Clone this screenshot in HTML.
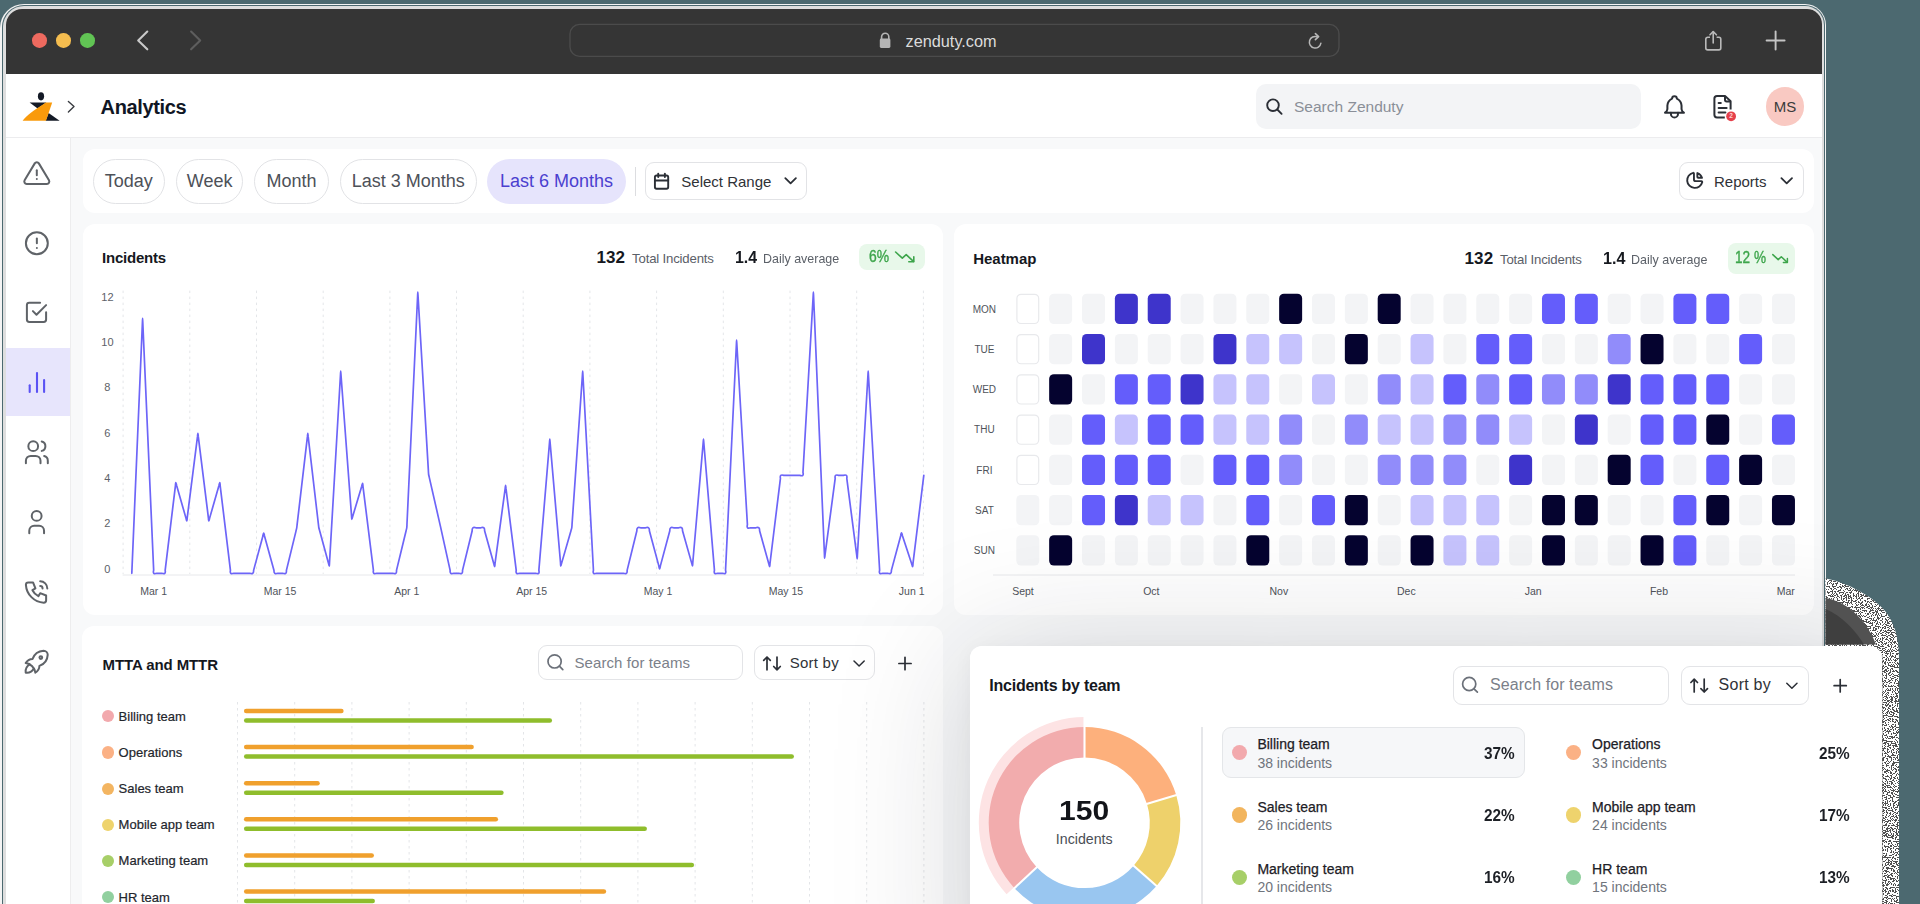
<!DOCTYPE html>
<html><head><meta charset="utf-8"><style>
html,body{margin:0;padding:0;}
body{width:1920px;height:904px;overflow:hidden;position:relative;background:#4c6970;font-family:"Liberation Sans", sans-serif;}
.a{position:absolute;box-sizing:border-box;}
.t{position:absolute;line-height:1;white-space:nowrap;-webkit-font-smoothing:antialiased;}
svg{position:absolute;overflow:visible;}
</style></head><body>
<div class="a" style="left:0.0px;top:4.0px;width:1826.0px;height:1096.0px;background:#f4f4f4;border-radius:24px 21px 0 0"></div><div class="a" style="left:2.0px;top:5.0px;width:1823.0px;height:1095.0px;background:#4c6970;border-radius:22px 20px 0 0"></div><div class="a" style="left:3.3px;top:6.0px;width:1820.9px;height:1094.0px;background:#dedede;border-radius:21px 19px 0 0"></div><div class="a" style="left:5.5px;top:9.0px;width:1816.5px;height:1091.0px;background:#fff;border-radius:16px 15px 0 0"></div><div class="a" style="left:5.5px;top:9.0px;width:1816.5px;height:65.0px;background:#353535;border-radius:16px 15px 0 0"></div><div class="a" style="left:32.2px;top:33.1px;width:14.6px;height:14.6px;background:#ee6a5f;border-radius:50%"></div><div class="a" style="left:56.0px;top:33.1px;width:14.6px;height:14.6px;background:#f5bd4f;border-radius:50%"></div><div class="a" style="left:80.0px;top:33.1px;width:14.6px;height:14.6px;background:#61c454;border-radius:50%"></div><svg style="left:0;top:0" width="1920" height="80"><polyline points="147.3,31.5 138.2,40.4 147.3,49.3" fill="none" stroke="#c9c9c9" stroke-width="2.1" stroke-linecap="round" stroke-linejoin="round"/><polyline points="191.1,31.5 200.2,40.4 191.1,49.3" fill="none" stroke="#5e5e5e" stroke-width="2.1" stroke-linecap="round" stroke-linejoin="round"/><rect x="570" y="24.4" width="769" height="32" rx="9.5" fill="none" stroke="#4b4b4b" stroke-width="1.4" transform="translate(0,0)"/></svg><svg style="left:0;top:0" width="1920" height="80"><path d="M881.6,39 v-2.2 a3.6,3.6 0 0 1 7.2,0 v2.2" fill="none" stroke="#b5b5b5" stroke-width="1.6"/><rect x="879.8" y="38.6" width="10.6" height="9.4" rx="1.4" fill="#b5b5b5"/><path d="M1320.9,43.2 A5.8,5.8 0 1 1 1317.2,36.8" fill="none" stroke="#b8b8b8" stroke-width="1.5" stroke-linecap="round"/><polyline points="1315.4,33.6 1318.6,36.6 1315.4,39.6" fill="none" stroke="#b8b8b8" stroke-width="1.6" stroke-linecap="round" stroke-linejoin="round"/><path d="M1710,37.3 h-2.3 a1.9,1.9 0 0 0 -1.9,1.9 v8.8 a1.9,1.9 0 0 0 1.9,1.9 h11.2 a1.9,1.9 0 0 0 1.9,-1.9 v-8.8 a1.9,1.9 0 0 0 -1.9,-1.9 h-2.3" fill="none" stroke="#b9b9b9" stroke-width="1.6"/><line x1="1713.2" y1="31.8" x2="1713.2" y2="43" stroke="#b9b9b9" stroke-width="1.6" stroke-linecap="round"/><polyline points="1710,34.8 1713.2,31.6 1716.4,34.8" fill="none" stroke="#b9b9b9" stroke-width="1.6" stroke-linecap="round" stroke-linejoin="round"/><line x1="1775.6" y1="31.5" x2="1775.6" y2="49.5" stroke="#c4c4c4" stroke-width="1.9" stroke-linecap="round"/><line x1="1766.6" y1="40.5" x2="1784.6" y2="40.5" stroke="#c4c4c4" stroke-width="1.9" stroke-linecap="round"/></svg><div class="t" style="left:905.5px;top:33.0px;font-size:16.3px;font-weight:400;color:#dcdcdc;">zenduty.com</div><div class="a" style="left:5.5px;top:136.5px;width:1816.5px;height:1.1px;background:#ececee"></div><svg style="left:0;top:0" width="200" height="140"><ellipse cx="41" cy="96.3" rx="3.1" ry="4.1" fill="#141a26"/><polygon points="29.6,102.6 46.4,102.6 37.6,108.6" fill="#141a26"/><polygon points="48.6,112.9 59.6,120.7 45.6,120.7" fill="#141a26"/><path d="M45.8,102.6 L52.2,102.6 L46,120.7 L22.6,120.7 C27,115 36,109 45.8,102.6 Z" fill="#f99a0b"/><polyline points="68.4,101.4 74,106.6 68.4,111.9" fill="none" stroke="#3a3d42" stroke-width="1.4" stroke-linecap="round" stroke-linejoin="round"/></svg><div class="t" style="left:100.6px;top:97.2px;font-size:20px;font-weight:700;color:#101624;letter-spacing:-0.35px;">Analytics</div><div class="a" style="left:1255.5px;top:83.8px;width:385.0px;height:45.5px;background:#f3f4f6;border-radius:10px"></div><svg style="left:0;top:0" width="1920" height="140"><circle cx="1273" cy="105.2" r="5.8" fill="none" stroke="#2a2e35" stroke-width="1.9"/><line x1="1277.3" y1="109.5" x2="1281.6" y2="113.8" stroke="#2a2e35" stroke-width="1.9" stroke-linecap="round"/><g transform="translate(1660.3,92.66) scale(1.18)" fill="none" stroke="#2b2f36" stroke-width="1.7" stroke-linecap="round" stroke-linejoin="round"><path d="M10 5a2 2 0 1 1 4 0a7 7 0 0 1 4 6v3a4 4 0 0 0 2 3h-16a4 4 0 0 0 2 -3v-3a7 7 0 0 1 4 -6"/><path d="M9 17v1a3 3 0 0 0 6 0v-1"/></g><path d="M1730.6,109.4 V101.3 L1725,95.9 H1717 a2.6,2.6 0 0 0 -2.6,2.6 V114.8 a2.6,2.6 0 0 0 2.6,2.6 H1724.8" fill="none" stroke="#2b2f36" stroke-width="2" stroke-linejoin="round"/><path d="M1725,96.2 V99.8 a1.6,1.6 0 0 0 1.6,1.6 H1730.4" fill="none" stroke="#2b2f36" stroke-width="2" stroke-linejoin="round"/><line x1="1718.6" y1="103.1" x2="1720.8" y2="103.1" stroke="#2b2f36" stroke-width="2" stroke-linecap="round"/><line x1="1718.6" y1="107.9" x2="1726.6" y2="107.9" stroke="#2b2f36" stroke-width="2" stroke-linecap="round"/><line x1="1718.6" y1="112.6" x2="1725.4" y2="112.6" stroke="#2b2f36" stroke-width="2" stroke-linecap="round"/><circle cx="1731.1" cy="116.3" r="4.9" fill="#e5404b"/></svg><div class="t" style="left:1729.2px;top:113.1px;font-size:6.5px;font-weight:700;color:#fbd0d0;">2</div><div class="t" style="left:1294.0px;top:99.0px;font-size:15.5px;font-weight:400;color:#8a8f98;">Search Zenduty</div><div class="a" style="left:1765.9px;top:87.2px;width:38.4px;height:38.4px;background:#f9c9c2;border-radius:50%"></div><div class="t" style="left:1485.1px;width:600px;text-align:center;top:98.8px;font-size:15px;font-weight:400;color:#3b3b3b;">MS</div><div class="a" style="left:71.0px;top:137.6px;width:1751.0px;height:962.4px;background:#f8f9fa"></div><div class="a" style="left:70.0px;top:137.6px;width:1.3px;height:962.4px;background:#ededee"></div><div class="a" style="left:5.5px;top:348.4px;width:64.5px;height:67.6px;background:#e7e5fc"></div><svg style="left:0;top:0" width="80" height="904"><g transform="translate(21.8,158.9) scale(1.25)" fill="none" stroke="#5f6368" stroke-width="1.600" stroke-linecap="round" stroke-linejoin="round"><path d="M12 9v4"/><path d="M10.363 3.591l-8.106 13.534a1.914 1.914 0 0 0 1.636 2.871h16.214a1.914 1.914 0 0 0 1.636 -2.87l-8.106 -13.536a1.914 1.914 0 0 0 -3.274 0z"/><path d="M12 16h.01"/></g></svg><svg style="left:0;top:0" width="80" height="904"><g transform="translate(22.25,228.65) scale(1.217)" fill="none" stroke="#5f6368" stroke-width="1.643" stroke-linecap="round" stroke-linejoin="round"><path d="M3 12a9 9 0 1 0 18 0a9 9 0 0 0 -18 0"/><path d="M12 8v4"/><path d="M12 16h.01"/></g></svg><svg style="left:0;top:0" width="80" height="904"><g transform="translate(22.1,297.9) scale(1.2)" fill="none" stroke="#5f6368" stroke-width="1.667" stroke-linecap="round" stroke-linejoin="round"><path d="M9 11l3 3l8 -8"/><path d="M20 12v6a2 2 0 0 1 -2 2h-12a2 2 0 0 1 -2 -2v-12a2 2 0 0 1 2 -2h9"/></g></svg><svg style="left:0;top:0" width="80" height="904"><line x1="29.7" y1="385.2" x2="29.7" y2="392" stroke="#5b52f4" stroke-width="2.1" stroke-linecap="round"/><line x1="37" y1="373" x2="37" y2="392" stroke="#5b52f4" stroke-width="2.1" stroke-linecap="round"/><line x1="44.1" y1="380.1" x2="44.1" y2="392" stroke="#5b52f4" stroke-width="2.1" stroke-linecap="round"/></svg><svg style="left:0;top:0" width="80" height="904"><g transform="translate(22.25,437.65) scale(1.217)" fill="none" stroke="#5f6368" stroke-width="1.643" stroke-linecap="round" stroke-linejoin="round"><path d="M9 7m-4 0a4 4 0 1 0 8 0a4 4 0 1 0 -8 0"/><path d="M3 21v-2a4 4 0 0 1 4 -4h4a4 4 0 0 1 4 4v2"/><path d="M16 3.13a4 4 0 0 1 0 7.75"/><path d="M21 21v-2a4 4 0 0 0 -3 -3.85"/></g></svg><svg style="left:0;top:0" width="80" height="904"><g transform="translate(21.9,507.3) scale(1.23)" fill="none" stroke="#5f6368" stroke-width="1.626" stroke-linecap="round" stroke-linejoin="round"><path d="M8 7a4 4 0 1 0 8 0a4 4 0 0 0 -8 0"/><path d="M6 21v-2a4 4 0 0 1 4 -4h4a4 4 0 0 1 4 4v2"/></g></svg><svg style="left:0;top:0" width="80" height="904"><g transform="translate(22.33,577.7) scale(1.19)" fill="none" stroke="#5f6368" stroke-width="1.681" stroke-linecap="round" stroke-linejoin="round"><path d="M5 4h4l2 5l-2.5 1.5a11 11 0 0 0 5 5l1.5 -2.5l5 2v4a2 2 0 0 1 -2 2a16 16 0 0 1 -15 -15a2 2 0 0 1 2 -2"/><path d="M15 7a2 2 0 0 1 2 2"/><path d="M15 3a6 6 0 0 1 6 6"/></g></svg><svg style="left:0;top:0" width="80" height="904"><g transform="translate(20.2,645.2) scale(1.375)" fill="none" stroke="#5f6368" stroke-width="1.455" stroke-linecap="round" stroke-linejoin="round"><path d="M4 13a8 8 0 0 1 7 7a6 6 0 0 0 3 -5a9 9 0 0 0 6 -8a3 3 0 0 0 -3 -3a9 9 0 0 0 -8 6a6 6 0 0 0 -5 3"/><path d="M7 14a6 6 0 0 0 -3 6a6 6 0 0 0 6 -3"/><path d="M15 9m-1 0a1 1 0 1 0 2 0a1 1 0 1 0 -2 0"/></g></svg><div class="a" style="left:83.0px;top:148.8px;width:1731.0px;height:64.4px;background:#fff;border-radius:12px"></div><div class="a" style="left:92.6px;top:158.6px;width:72.4px;height:45.0px;background:#fff;border:1.2px solid #e2e3e6;border-radius:23px"></div><div class="t" style="left:-171.2px;width:600px;text-align:center;top:172.2px;font-size:18px;font-weight:400;color:#4d5158;">Today</div><div class="a" style="left:175.7px;top:158.6px;width:67.7px;height:45.0px;background:#fff;border:1.2px solid #e2e3e6;border-radius:23px"></div><div class="t" style="left:-90.4px;width:600px;text-align:center;top:172.2px;font-size:18px;font-weight:400;color:#4d5158;">Week</div><div class="a" style="left:254.0px;top:158.6px;width:75.3px;height:45.0px;background:#fff;border:1.2px solid #e2e3e6;border-radius:23px"></div><div class="t" style="left:-8.4px;width:600px;text-align:center;top:172.2px;font-size:18px;font-weight:400;color:#4d5158;">Month</div><div class="a" style="left:339.6px;top:158.6px;width:137.4px;height:45.0px;background:#fff;border:1.2px solid #e2e3e6;border-radius:23px"></div><div class="t" style="left:108.3px;width:600px;text-align:center;top:172.2px;font-size:18px;font-weight:400;color:#4d5158;">Last 3 Months</div><div class="a" style="left:487.4px;top:158.5px;width:138.2px;height:45.5px;background:#e6e4fc;border-radius:23px"></div><div class="t" style="left:256.5px;width:600px;text-align:center;top:172.2px;font-size:18px;font-weight:400;color:#4b40cf;">Last 6 Months</div><div class="a" style="left:635.2px;top:166.8px;width:1.3px;height:29.2px;background:#dcdde0"></div><div class="a" style="left:645.2px;top:162.4px;width:161.5px;height:38.1px;background:#fff;border:1.2px solid #e2e3e6;border-radius:9px"></div><div class="t" style="left:681.3px;top:174.1px;font-size:15px;font-weight:400;color:#2f3237;">Select Range</div><svg style="left:0;top:0" width="1920" height="230"><g transform="translate(651.6,171.3) scale(0.83)" fill="none" stroke="#2b2f36" stroke-width="2.3" stroke-linecap="round" stroke-linejoin="round"><path d="M4 7a2 2 0 0 1 2 -2h12a2 2 0 0 1 2 2v12a2 2 0 0 1 -2 2h-12a2 2 0 0 1 -2 -2v-12z"/><path d="M16 3v4"/><path d="M8 3v4"/><path d="M4 11h16"/></g><polyline points="785.3,178.2 790.6,183.4 795.9,178.2" fill="none" stroke="#2b2f36" stroke-width="1.8" stroke-linecap="round" stroke-linejoin="round"/></svg><div class="a" style="left:1678.5px;top:162.4px;width:125.7px;height:37.8px;background:#fff;border:1.2px solid #e2e3e6;border-radius:9px"></div><div class="t" style="left:1714.0px;top:174.1px;font-size:15px;font-weight:400;color:#2f3237;">Reports</div><svg style="left:0;top:0" width="1920" height="230"><g transform="translate(1684.6,170.1) scale(0.85)" fill="none" stroke="#2b2f36" stroke-width="2.2" stroke-linecap="round" stroke-linejoin="round"><path d="M10 3.2a9 9 0 1 0 10.8 10.8a1 1 0 0 0 -1 -1h-6.8a2 2 0 0 1 -2 -2v-7a.9 .9 0 0 0 -1 -.8"/><path d="M15 3.5a9 9 0 0 1 5.5 5.5h-4.5a1 1 0 0 1 -1 -1v-4.5"/></g><polyline points="1781.4,178.2 1786.7,183.4 1792,178.2" fill="none" stroke="#2b2f36" stroke-width="1.8" stroke-linecap="round" stroke-linejoin="round"/></svg><div class="a" style="left:82.6px;top:223.5px;width:860.1px;height:391.6px;background:#fff;border-radius:12px"></div><div class="t" style="left:102.0px;top:249.6px;font-size:15px;font-weight:700;color:#15181e;letter-spacing:-0.205px;">Incidents</div><div class="t" style="left:596.5px;top:248.9px;font-size:17px;font-weight:700;color:#15181e;letter-spacing:0.068px;">132</div><div class="t" style="left:632.1px;top:252.2px;font-size:13.2px;font-weight:400;color:#5b6068;letter-spacing:-0.177px;">Total Incidents</div><div class="t" style="left:734.7px;top:248.9px;font-size:17px;font-weight:700;color:#15181e;transform:scaleX(0.9351);transform-origin:0 0;">1.4</div><div class="t" style="left:763.4px;top:252.2px;font-size:13.2px;font-weight:400;color:#5b6068;transform:scaleX(0.9454);transform-origin:0 0;">Daily average</div><div class="a" style="left:859.4px;top:244.0px;width:65.2px;height:26.3px;background:#e8f8ea;border-radius:8px"></div><div class="t" style="left:869.3px;top:248.9px;font-size:15.8px;font-weight:400;color:#3da54b;-webkit-text-stroke:0.35px #3da54b;transform:scaleX(0.8802);transform-origin:0 0;">6%</div><svg style="left:0;top:0" width="1920" height="300"><polyline points="895.6,252 902.3,258.2 906.2,254.6 913.4,261.4" fill="none" stroke="#3da54b" stroke-width="1.6" stroke-linecap="round" stroke-linejoin="round"/><polyline points="908.8,261.8 913.8,261.8 913.8,256.8" fill="none" stroke="#3da54b" stroke-width="1.6" stroke-linecap="round" stroke-linejoin="round"/></svg><div class="t" style="left:-192.6px;width:600px;text-align:center;top:291.5px;font-size:11px;font-weight:400;color:#5d6168;">12</div><div class="t" style="left:-192.6px;width:600px;text-align:center;top:336.9px;font-size:11px;font-weight:400;color:#5d6168;">10</div><div class="t" style="left:-192.6px;width:600px;text-align:center;top:382.3px;font-size:11px;font-weight:400;color:#5d6168;">8</div><div class="t" style="left:-192.6px;width:600px;text-align:center;top:427.7px;font-size:11px;font-weight:400;color:#5d6168;">6</div><div class="t" style="left:-192.6px;width:600px;text-align:center;top:473.0px;font-size:11px;font-weight:400;color:#5d6168;">4</div><div class="t" style="left:-192.6px;width:600px;text-align:center;top:518.4px;font-size:11px;font-weight:400;color:#5d6168;">2</div><div class="t" style="left:-192.6px;width:600px;text-align:center;top:563.8px;font-size:11px;font-weight:400;color:#5d6168;">0</div><div class="t" style="left:-146.3px;width:600px;text-align:center;top:585.7px;font-size:10.5px;font-weight:400;color:#4f535a;">Mar 1</div><div class="t" style="left:-20.0px;width:600px;text-align:center;top:585.7px;font-size:10.5px;font-weight:400;color:#4f535a;">Mar 15</div><div class="t" style="left:106.7px;width:600px;text-align:center;top:585.7px;font-size:10.5px;font-weight:400;color:#4f535a;">Apr 1</div><div class="t" style="left:231.7px;width:600px;text-align:center;top:585.7px;font-size:10.5px;font-weight:400;color:#4f535a;">Apr 15</div><div class="t" style="left:358.0px;width:600px;text-align:center;top:585.7px;font-size:10.5px;font-weight:400;color:#4f535a;">May 1</div><div class="t" style="left:486.0px;width:600px;text-align:center;top:585.7px;font-size:10.5px;font-weight:400;color:#4f535a;">May 15</div><div class="t" style="left:611.7px;width:600px;text-align:center;top:585.7px;font-size:10.5px;font-weight:400;color:#4f535a;">Jun 1</div><svg style="left:0;top:0" width="1920" height="620"><line x1="123.1" y1="290.6" x2="123.1" y2="574" stroke="#e4e6e9" stroke-width="1" stroke-dasharray="2.5 3.5"/><line x1="189.8" y1="290.6" x2="189.8" y2="574" stroke="#e4e6e9" stroke-width="1" stroke-dasharray="2.5 3.5"/><line x1="256.5" y1="290.6" x2="256.5" y2="574" stroke="#e4e6e9" stroke-width="1" stroke-dasharray="2.5 3.5"/><line x1="323.2" y1="290.6" x2="323.2" y2="574" stroke="#e4e6e9" stroke-width="1" stroke-dasharray="2.5 3.5"/><line x1="389.9" y1="290.6" x2="389.9" y2="574" stroke="#e4e6e9" stroke-width="1" stroke-dasharray="2.5 3.5"/><line x1="456.5" y1="290.6" x2="456.5" y2="574" stroke="#e4e6e9" stroke-width="1" stroke-dasharray="2.5 3.5"/><line x1="523.2" y1="290.6" x2="523.2" y2="574" stroke="#e4e6e9" stroke-width="1" stroke-dasharray="2.5 3.5"/><line x1="589.9" y1="290.6" x2="589.9" y2="574" stroke="#e4e6e9" stroke-width="1" stroke-dasharray="2.5 3.5"/><line x1="656.6" y1="290.6" x2="656.6" y2="574" stroke="#e4e6e9" stroke-width="1" stroke-dasharray="2.5 3.5"/><line x1="723.3" y1="290.6" x2="723.3" y2="574" stroke="#e4e6e9" stroke-width="1" stroke-dasharray="2.5 3.5"/><line x1="790.0" y1="290.6" x2="790.0" y2="574" stroke="#e4e6e9" stroke-width="1" stroke-dasharray="2.5 3.5"/><line x1="856.7" y1="290.6" x2="856.7" y2="574" stroke="#e4e6e9" stroke-width="1" stroke-dasharray="2.5 3.5"/><line x1="923.4" y1="290.6" x2="923.4" y2="574" stroke="#e4e6e9" stroke-width="1" stroke-dasharray="2.5 3.5"/><line x1="122.6" y1="575" x2="924" y2="575" stroke="#e7e8eb" stroke-width="1"/><path d="M131.80,573.30 L142.47,321.30 Q142.60,315.30 142.73,321.30 L153.67,570.30 Q152.37,574.80 156.80,573.30 L161.80,573.30 Q166.12,574.79 165.16,570.32 L175.44,485.58 Q175.57,479.67 176.63,485.48 L185.97,518.12 Q187.02,523.93 187.18,518.02 L197.52,436.38 Q197.90,430.42 198.27,436.38 L208.43,518.02 Q208.57,523.93 209.63,518.12 L218.97,485.48 Q220.03,479.67 220.16,485.58 L230.44,570.32 Q229.48,574.79 233.80,573.30 L238.80,573.30 Q241.80,573.30 244.80,573.30 L249.80,573.30 Q253.91,574.75 253.59,570.40 L262.91,536.00 Q263.69,530.21 264.50,535.99 L274.00,570.41 Q273.70,574.75 277.80,573.30 L282.70,573.30 Q286.84,574.76 286.41,570.39 L295.99,531.11 Q296.88,528.23 297.05,525.22 L307.45,436.38 Q307.80,430.42 308.15,436.38 L318.45,524.62 Q318.58,527.64 319.59,530.49 L328.51,563.31 Q329.61,569.14 329.47,563.21 L340.53,373.99 Q340.68,368.01 340.92,373.99 L351.58,516.41 Q351.48,522.33 352.66,516.53 L361.74,486.17 Q362.84,480.37 362.97,486.28 L373.43,570.32 Q372.49,574.79 376.80,573.30 L381.80,573.30 Q384.80,573.30 387.80,573.30 L392.80,573.30 Q396.95,574.76 396.50,570.38 L406.10,530.72 Q407.08,527.84 406.94,524.80 L417.66,295.00 Q417.78,289.00 417.98,294.99 L428.42,471.41 Q428.36,474.43 429.27,477.32 L439.13,520.58 Q439.81,523.50 440.45,526.43 L450.15,570.37 Q449.62,574.76 453.80,573.30 L458.80,573.30 Q462.94,574.76 462.51,570.39 L472.19,530.71 Q471.76,526.34 475.90,527.80 L480.80,527.80 Q484.90,526.35 484.60,530.69 L493.80,563.71 Q494.80,569.53 495.00,563.63 L505.20,488.37 Q505.62,482.43 505.97,488.38 L516.23,570.32 Q515.29,574.79 519.60,573.30 L524.80,573.30 Q527.80,573.30 530.80,573.30 L535.60,573.30 Q539.98,574.79 538.85,570.31 L549.55,441.99 Q549.80,436.01 550.06,441.99 L560.54,563.01 Q560.51,568.94 561.63,563.12 L570.97,530.68 Q572.11,527.85 572.01,524.81 L582.49,373.99 Q582.72,368.01 582.86,374.00 L593.44,570.30 Q592.18,574.80 596.60,573.30 L601.80,573.30 Q604.80,573.30 607.80,573.30 L612.80,573.30 Q615.80,573.30 618.80,573.30 L623.40,573.30 Q627.54,574.76 627.12,570.39 L636.88,530.71 Q636.46,526.34 640.60,527.80 L645.60,527.80 Q649.71,526.35 649.38,530.70 L658.82,565.90 Q659.60,571.70 660.38,565.90 L669.82,530.70 Q669.49,526.35 673.60,527.80 L678.70,527.80 Q682.79,526.36 682.52,530.69 L691.68,563.11 Q692.78,568.94 692.76,563.01 L703.24,441.99 Q703.50,436.01 703.75,441.99 L714.45,570.31 Q713.32,574.79 717.70,573.30 L722.40,573.30 Q726.83,574.80 725.54,570.30 L736.46,343.00 Q736.58,337.00 736.78,342.99 L747.42,524.81 Q746.19,529.30 750.60,527.80 L755.80,527.80 Q759.90,526.35 759.60,530.69 L768.80,563.71 Q769.82,569.53 769.97,563.62 L780.43,478.38 Q779.48,473.91 783.80,475.40 L788.80,475.40 Q791.80,475.40 794.80,475.40 L799.80,475.40 Q804.21,476.90 802.97,472.40 L813.23,295.00 Q813.42,289.00 813.53,295.00 L824.47,555.20 Q824.47,561.19 825.00,555.23 L835.20,478.37 Q834.30,473.91 838.60,475.40 L843.40,475.40 Q847.71,473.91 846.79,478.38 L856.81,555.82 Q857.30,561.79 857.38,555.81 L868.02,373.99 Q868.20,368.01 868.37,374.00 L879.63,570.30 Q878.39,574.80 882.80,573.30 L887.60,573.30 Q891.71,574.75 891.38,570.40 L900.72,535.70 Q901.42,529.93 902.44,535.65 L911.66,563.75 Q912.89,569.51 912.97,563.62 L923.80,475.40" fill="none" stroke="#6d65f8" stroke-width="1.7" stroke-linejoin="round" stroke-linecap="round"/></svg><div class="a" style="left:953.7px;top:223.5px;width:860.1px;height:391.3px;background:#fff;border-radius:12px"></div><div class="t" style="left:973.2px;top:250.9px;font-size:15px;font-weight:700;color:#15181e;letter-spacing:-0.026px;">Heatmap</div><div class="t" style="left:1464.4px;top:250.1px;font-size:17px;font-weight:700;color:#15181e;letter-spacing:0.218px;">132</div><div class="t" style="left:1500.0px;top:253.3px;font-size:13.2px;font-weight:400;color:#5b6068;letter-spacing:-0.17px;">Total Incidents</div><div class="t" style="left:1602.6px;top:250.1px;font-size:17px;font-weight:700;color:#15181e;transform:scaleX(0.9478);transform-origin:0 0;">1.4</div><div class="t" style="left:1631.2px;top:253.3px;font-size:13.2px;font-weight:400;color:#5b6068;transform:scaleX(0.9467);transform-origin:0 0;">Daily average</div><div class="a" style="left:1727.5px;top:242.7px;width:67.3px;height:30.9px;background:#e8f8ea;border-radius:8px"></div><div class="t" style="left:1735.3px;top:250.2px;font-size:15.8px;font-weight:400;color:#3da54b;-webkit-text-stroke:0.35px #3da54b;transform:scaleX(0.8608);transform-origin:0 0;">12 %</div><svg style="left:0;top:0" width="1920" height="300"><polyline points="1772.8,254.6 1778.2,259.6 1781.3,256.7 1787.0,262.1" fill="none" stroke="#3da54b" stroke-width="1.5" stroke-linecap="round" stroke-linejoin="round"/><polyline points="1783.4,262.4 1787.4,262.4 1787.4,258.4" fill="none" stroke="#3da54b" stroke-width="1.5" stroke-linecap="round" stroke-linejoin="round"/></svg><svg style="left:0;top:0" width="1920" height="620"><rect x="1016.90" y="294.30" width="21.8" height="29.2" rx="4.2" fill="#fff" stroke="#e8e9ec" stroke-width="1.2"/><rect x="1049.15" y="293.70" width="23" height="30.4" rx="4.8" fill="#f3f4f6"/><rect x="1082.01" y="293.70" width="23" height="30.4" rx="4.8" fill="#f3f4f6"/><rect x="1114.87" y="293.70" width="23" height="30.4" rx="4.8" fill="#3e34cb"/><rect x="1147.72" y="293.70" width="23" height="30.4" rx="4.8" fill="#3e34cb"/><rect x="1180.57" y="293.70" width="23" height="30.4" rx="4.8" fill="#f3f4f6"/><rect x="1213.43" y="293.70" width="23" height="30.4" rx="4.8" fill="#f3f4f6"/><rect x="1246.28" y="293.70" width="23" height="30.4" rx="4.8" fill="#f3f4f6"/><rect x="1279.14" y="293.70" width="23" height="30.4" rx="4.8" fill="#05032f"/><rect x="1311.99" y="293.70" width="23" height="30.4" rx="4.8" fill="#f3f4f6"/><rect x="1344.85" y="293.70" width="23" height="30.4" rx="4.8" fill="#f3f4f6"/><rect x="1377.70" y="293.70" width="23" height="30.4" rx="4.8" fill="#05032f"/><rect x="1410.56" y="293.70" width="23" height="30.4" rx="4.8" fill="#f3f4f6"/><rect x="1443.41" y="293.70" width="23" height="30.4" rx="4.8" fill="#f3f4f6"/><rect x="1476.27" y="293.70" width="23" height="30.4" rx="4.8" fill="#f3f4f6"/><rect x="1509.12" y="293.70" width="23" height="30.4" rx="4.8" fill="#f3f4f6"/><rect x="1541.98" y="293.70" width="23" height="30.4" rx="4.8" fill="#645dfb"/><rect x="1574.84" y="293.70" width="23" height="30.4" rx="4.8" fill="#645dfb"/><rect x="1607.69" y="293.70" width="23" height="30.4" rx="4.8" fill="#f3f4f6"/><rect x="1640.54" y="293.70" width="23" height="30.4" rx="4.8" fill="#f3f4f6"/><rect x="1673.40" y="293.70" width="23" height="30.4" rx="4.8" fill="#645dfb"/><rect x="1706.25" y="293.70" width="23" height="30.4" rx="4.8" fill="#645dfb"/><rect x="1739.11" y="293.70" width="23" height="30.4" rx="4.8" fill="#f3f4f6"/><rect x="1771.96" y="293.70" width="23" height="30.4" rx="4.8" fill="#f3f4f6"/><rect x="1016.90" y="334.55" width="21.8" height="29.2" rx="4.2" fill="#fff" stroke="#e8e9ec" stroke-width="1.2"/><rect x="1049.15" y="333.95" width="23" height="30.4" rx="4.8" fill="#f3f4f6"/><rect x="1082.01" y="333.95" width="23" height="30.4" rx="4.8" fill="#3e34cb"/><rect x="1114.87" y="333.95" width="23" height="30.4" rx="4.8" fill="#f3f4f6"/><rect x="1147.72" y="333.95" width="23" height="30.4" rx="4.8" fill="#f3f4f6"/><rect x="1180.57" y="333.95" width="23" height="30.4" rx="4.8" fill="#f3f4f6"/><rect x="1213.43" y="333.95" width="23" height="30.4" rx="4.8" fill="#3e34cb"/><rect x="1246.28" y="333.95" width="23" height="30.4" rx="4.8" fill="#c6c3fd"/><rect x="1279.14" y="333.95" width="23" height="30.4" rx="4.8" fill="#c6c3fd"/><rect x="1311.99" y="333.95" width="23" height="30.4" rx="4.8" fill="#f3f4f6"/><rect x="1344.85" y="333.95" width="23" height="30.4" rx="4.8" fill="#05032f"/><rect x="1377.70" y="333.95" width="23" height="30.4" rx="4.8" fill="#f3f4f6"/><rect x="1410.56" y="333.95" width="23" height="30.4" rx="4.8" fill="#c6c3fd"/><rect x="1443.41" y="333.95" width="23" height="30.4" rx="4.8" fill="#f3f4f6"/><rect x="1476.27" y="333.95" width="23" height="30.4" rx="4.8" fill="#645dfb"/><rect x="1509.12" y="333.95" width="23" height="30.4" rx="4.8" fill="#645dfb"/><rect x="1541.98" y="333.95" width="23" height="30.4" rx="4.8" fill="#f3f4f6"/><rect x="1574.84" y="333.95" width="23" height="30.4" rx="4.8" fill="#f3f4f6"/><rect x="1607.69" y="333.95" width="23" height="30.4" rx="4.8" fill="#918cfa"/><rect x="1640.54" y="333.95" width="23" height="30.4" rx="4.8" fill="#05032f"/><rect x="1673.40" y="333.95" width="23" height="30.4" rx="4.8" fill="#f3f4f6"/><rect x="1706.25" y="333.95" width="23" height="30.4" rx="4.8" fill="#f3f4f6"/><rect x="1739.11" y="333.95" width="23" height="30.4" rx="4.8" fill="#645dfb"/><rect x="1771.96" y="333.95" width="23" height="30.4" rx="4.8" fill="#f3f4f6"/><rect x="1016.90" y="374.80" width="21.8" height="29.2" rx="4.2" fill="#fff" stroke="#e8e9ec" stroke-width="1.2"/><rect x="1049.15" y="374.20" width="23" height="30.4" rx="4.8" fill="#05032f"/><rect x="1082.01" y="374.20" width="23" height="30.4" rx="4.8" fill="#f3f4f6"/><rect x="1114.87" y="374.20" width="23" height="30.4" rx="4.8" fill="#645dfb"/><rect x="1147.72" y="374.20" width="23" height="30.4" rx="4.8" fill="#645dfb"/><rect x="1180.57" y="374.20" width="23" height="30.4" rx="4.8" fill="#3e34cb"/><rect x="1213.43" y="374.20" width="23" height="30.4" rx="4.8" fill="#c6c3fd"/><rect x="1246.28" y="374.20" width="23" height="30.4" rx="4.8" fill="#c6c3fd"/><rect x="1279.14" y="374.20" width="23" height="30.4" rx="4.8" fill="#f3f4f6"/><rect x="1311.99" y="374.20" width="23" height="30.4" rx="4.8" fill="#c6c3fd"/><rect x="1344.85" y="374.20" width="23" height="30.4" rx="4.8" fill="#f3f4f6"/><rect x="1377.70" y="374.20" width="23" height="30.4" rx="4.8" fill="#918cfa"/><rect x="1410.56" y="374.20" width="23" height="30.4" rx="4.8" fill="#c6c3fd"/><rect x="1443.41" y="374.20" width="23" height="30.4" rx="4.8" fill="#645dfb"/><rect x="1476.27" y="374.20" width="23" height="30.4" rx="4.8" fill="#918cfa"/><rect x="1509.12" y="374.20" width="23" height="30.4" rx="4.8" fill="#645dfb"/><rect x="1541.98" y="374.20" width="23" height="30.4" rx="4.8" fill="#918cfa"/><rect x="1574.84" y="374.20" width="23" height="30.4" rx="4.8" fill="#918cfa"/><rect x="1607.69" y="374.20" width="23" height="30.4" rx="4.8" fill="#3e34cb"/><rect x="1640.54" y="374.20" width="23" height="30.4" rx="4.8" fill="#645dfb"/><rect x="1673.40" y="374.20" width="23" height="30.4" rx="4.8" fill="#645dfb"/><rect x="1706.25" y="374.20" width="23" height="30.4" rx="4.8" fill="#645dfb"/><rect x="1739.11" y="374.20" width="23" height="30.4" rx="4.8" fill="#f3f4f6"/><rect x="1771.96" y="374.20" width="23" height="30.4" rx="4.8" fill="#f3f4f6"/><rect x="1016.90" y="415.05" width="21.8" height="29.2" rx="4.2" fill="#fff" stroke="#e8e9ec" stroke-width="1.2"/><rect x="1049.15" y="414.45" width="23" height="30.4" rx="4.8" fill="#f3f4f6"/><rect x="1082.01" y="414.45" width="23" height="30.4" rx="4.8" fill="#645dfb"/><rect x="1114.87" y="414.45" width="23" height="30.4" rx="4.8" fill="#c6c3fd"/><rect x="1147.72" y="414.45" width="23" height="30.4" rx="4.8" fill="#645dfb"/><rect x="1180.57" y="414.45" width="23" height="30.4" rx="4.8" fill="#645dfb"/><rect x="1213.43" y="414.45" width="23" height="30.4" rx="4.8" fill="#c6c3fd"/><rect x="1246.28" y="414.45" width="23" height="30.4" rx="4.8" fill="#c6c3fd"/><rect x="1279.14" y="414.45" width="23" height="30.4" rx="4.8" fill="#918cfa"/><rect x="1311.99" y="414.45" width="23" height="30.4" rx="4.8" fill="#f3f4f6"/><rect x="1344.85" y="414.45" width="23" height="30.4" rx="4.8" fill="#918cfa"/><rect x="1377.70" y="414.45" width="23" height="30.4" rx="4.8" fill="#c6c3fd"/><rect x="1410.56" y="414.45" width="23" height="30.4" rx="4.8" fill="#c6c3fd"/><rect x="1443.41" y="414.45" width="23" height="30.4" rx="4.8" fill="#918cfa"/><rect x="1476.27" y="414.45" width="23" height="30.4" rx="4.8" fill="#918cfa"/><rect x="1509.12" y="414.45" width="23" height="30.4" rx="4.8" fill="#c6c3fd"/><rect x="1541.98" y="414.45" width="23" height="30.4" rx="4.8" fill="#f3f4f6"/><rect x="1574.84" y="414.45" width="23" height="30.4" rx="4.8" fill="#3e34cb"/><rect x="1607.69" y="414.45" width="23" height="30.4" rx="4.8" fill="#f3f4f6"/><rect x="1640.54" y="414.45" width="23" height="30.4" rx="4.8" fill="#645dfb"/><rect x="1673.40" y="414.45" width="23" height="30.4" rx="4.8" fill="#645dfb"/><rect x="1706.25" y="414.45" width="23" height="30.4" rx="4.8" fill="#05032f"/><rect x="1739.11" y="414.45" width="23" height="30.4" rx="4.8" fill="#f3f4f6"/><rect x="1771.96" y="414.45" width="23" height="30.4" rx="4.8" fill="#645dfb"/><rect x="1016.90" y="455.30" width="21.8" height="29.2" rx="4.2" fill="#fff" stroke="#e8e9ec" stroke-width="1.2"/><rect x="1049.15" y="454.70" width="23" height="30.4" rx="4.8" fill="#f3f4f6"/><rect x="1082.01" y="454.70" width="23" height="30.4" rx="4.8" fill="#645dfb"/><rect x="1114.87" y="454.70" width="23" height="30.4" rx="4.8" fill="#645dfb"/><rect x="1147.72" y="454.70" width="23" height="30.4" rx="4.8" fill="#645dfb"/><rect x="1180.57" y="454.70" width="23" height="30.4" rx="4.8" fill="#f3f4f6"/><rect x="1213.43" y="454.70" width="23" height="30.4" rx="4.8" fill="#645dfb"/><rect x="1246.28" y="454.70" width="23" height="30.4" rx="4.8" fill="#645dfb"/><rect x="1279.14" y="454.70" width="23" height="30.4" rx="4.8" fill="#918cfa"/><rect x="1311.99" y="454.70" width="23" height="30.4" rx="4.8" fill="#f3f4f6"/><rect x="1344.85" y="454.70" width="23" height="30.4" rx="4.8" fill="#f3f4f6"/><rect x="1377.70" y="454.70" width="23" height="30.4" rx="4.8" fill="#918cfa"/><rect x="1410.56" y="454.70" width="23" height="30.4" rx="4.8" fill="#918cfa"/><rect x="1443.41" y="454.70" width="23" height="30.4" rx="4.8" fill="#918cfa"/><rect x="1476.27" y="454.70" width="23" height="30.4" rx="4.8" fill="#f3f4f6"/><rect x="1509.12" y="454.70" width="23" height="30.4" rx="4.8" fill="#3e34cb"/><rect x="1541.98" y="454.70" width="23" height="30.4" rx="4.8" fill="#f3f4f6"/><rect x="1574.84" y="454.70" width="23" height="30.4" rx="4.8" fill="#f3f4f6"/><rect x="1607.69" y="454.70" width="23" height="30.4" rx="4.8" fill="#05032f"/><rect x="1640.54" y="454.70" width="23" height="30.4" rx="4.8" fill="#645dfb"/><rect x="1673.40" y="454.70" width="23" height="30.4" rx="4.8" fill="#f3f4f6"/><rect x="1706.25" y="454.70" width="23" height="30.4" rx="4.8" fill="#645dfb"/><rect x="1739.11" y="454.70" width="23" height="30.4" rx="4.8" fill="#05032f"/><rect x="1771.96" y="454.70" width="23" height="30.4" rx="4.8" fill="#f3f4f6"/><rect x="1016.30" y="494.95" width="23" height="30.4" rx="4.8" fill="#f3f4f6"/><rect x="1049.15" y="494.95" width="23" height="30.4" rx="4.8" fill="#f3f4f6"/><rect x="1082.01" y="494.95" width="23" height="30.4" rx="4.8" fill="#645dfb"/><rect x="1114.87" y="494.95" width="23" height="30.4" rx="4.8" fill="#3e34cb"/><rect x="1147.72" y="494.95" width="23" height="30.4" rx="4.8" fill="#c6c3fd"/><rect x="1180.57" y="494.95" width="23" height="30.4" rx="4.8" fill="#c6c3fd"/><rect x="1213.43" y="494.95" width="23" height="30.4" rx="4.8" fill="#f3f4f6"/><rect x="1246.28" y="494.95" width="23" height="30.4" rx="4.8" fill="#645dfb"/><rect x="1279.14" y="494.95" width="23" height="30.4" rx="4.8" fill="#f3f4f6"/><rect x="1311.99" y="494.95" width="23" height="30.4" rx="4.8" fill="#645dfb"/><rect x="1344.85" y="494.95" width="23" height="30.4" rx="4.8" fill="#05032f"/><rect x="1377.70" y="494.95" width="23" height="30.4" rx="4.8" fill="#f3f4f6"/><rect x="1410.56" y="494.95" width="23" height="30.4" rx="4.8" fill="#c6c3fd"/><rect x="1443.41" y="494.95" width="23" height="30.4" rx="4.8" fill="#c6c3fd"/><rect x="1476.27" y="494.95" width="23" height="30.4" rx="4.8" fill="#c6c3fd"/><rect x="1509.12" y="494.95" width="23" height="30.4" rx="4.8" fill="#f3f4f6"/><rect x="1541.98" y="494.95" width="23" height="30.4" rx="4.8" fill="#05032f"/><rect x="1574.84" y="494.95" width="23" height="30.4" rx="4.8" fill="#05032f"/><rect x="1607.69" y="494.95" width="23" height="30.4" rx="4.8" fill="#f3f4f6"/><rect x="1640.54" y="494.95" width="23" height="30.4" rx="4.8" fill="#f3f4f6"/><rect x="1673.40" y="494.95" width="23" height="30.4" rx="4.8" fill="#645dfb"/><rect x="1706.25" y="494.95" width="23" height="30.4" rx="4.8" fill="#05032f"/><rect x="1739.11" y="494.95" width="23" height="30.4" rx="4.8" fill="#f3f4f6"/><rect x="1771.96" y="494.95" width="23" height="30.4" rx="4.8" fill="#05032f"/><rect x="1016.30" y="535.20" width="23" height="30.4" rx="4.8" fill="#f3f4f6"/><rect x="1049.15" y="535.20" width="23" height="30.4" rx="4.8" fill="#05032f"/><rect x="1082.01" y="535.20" width="23" height="30.4" rx="4.8" fill="#f3f4f6"/><rect x="1114.87" y="535.20" width="23" height="30.4" rx="4.8" fill="#f3f4f6"/><rect x="1147.72" y="535.20" width="23" height="30.4" rx="4.8" fill="#f3f4f6"/><rect x="1180.57" y="535.20" width="23" height="30.4" rx="4.8" fill="#f3f4f6"/><rect x="1213.43" y="535.20" width="23" height="30.4" rx="4.8" fill="#f3f4f6"/><rect x="1246.28" y="535.20" width="23" height="30.4" rx="4.8" fill="#05032f"/><rect x="1279.14" y="535.20" width="23" height="30.4" rx="4.8" fill="#f3f4f6"/><rect x="1311.99" y="535.20" width="23" height="30.4" rx="4.8" fill="#f3f4f6"/><rect x="1344.85" y="535.20" width="23" height="30.4" rx="4.8" fill="#05032f"/><rect x="1377.70" y="535.20" width="23" height="30.4" rx="4.8" fill="#f3f4f6"/><rect x="1410.56" y="535.20" width="23" height="30.4" rx="4.8" fill="#05032f"/><rect x="1443.41" y="535.20" width="23" height="30.4" rx="4.8" fill="#c6c3fd"/><rect x="1476.27" y="535.20" width="23" height="30.4" rx="4.8" fill="#c6c3fd"/><rect x="1509.12" y="535.20" width="23" height="30.4" rx="4.8" fill="#f3f4f6"/><rect x="1541.98" y="535.20" width="23" height="30.4" rx="4.8" fill="#05032f"/><rect x="1574.84" y="535.20" width="23" height="30.4" rx="4.8" fill="#f3f4f6"/><rect x="1607.69" y="535.20" width="23" height="30.4" rx="4.8" fill="#f3f4f6"/><rect x="1640.54" y="535.20" width="23" height="30.4" rx="4.8" fill="#05032f"/><rect x="1673.40" y="535.20" width="23" height="30.4" rx="4.8" fill="#645dfb"/><rect x="1706.25" y="535.20" width="23" height="30.4" rx="4.8" fill="#f3f4f6"/><rect x="1739.11" y="535.20" width="23" height="30.4" rx="4.8" fill="#f3f4f6"/><rect x="1771.96" y="535.20" width="23" height="30.4" rx="4.8" fill="#f3f4f6"/><line x1="993" y1="575" x2="1795" y2="575" stroke="#e7e8eb" stroke-width="1"/></svg><div class="t" style="left:684.4px;width:600px;text-align:center;top:304.5px;font-size:10px;font-weight:400;color:#4f535a;">MON</div><div class="t" style="left:684.4px;width:600px;text-align:center;top:344.8px;font-size:10px;font-weight:400;color:#4f535a;">TUE</div><div class="t" style="left:684.4px;width:600px;text-align:center;top:385.0px;font-size:10px;font-weight:400;color:#4f535a;">WED</div><div class="t" style="left:684.4px;width:600px;text-align:center;top:425.2px;font-size:10px;font-weight:400;color:#4f535a;">THU</div><div class="t" style="left:684.4px;width:600px;text-align:center;top:465.5px;font-size:10px;font-weight:400;color:#4f535a;">FRI</div><div class="t" style="left:684.4px;width:600px;text-align:center;top:505.8px;font-size:10px;font-weight:400;color:#4f535a;">SAT</div><div class="t" style="left:684.4px;width:600px;text-align:center;top:546.0px;font-size:10px;font-weight:400;color:#4f535a;">SUN</div><div class="t" style="left:723.0px;width:600px;text-align:center;top:585.7px;font-size:10.5px;font-weight:400;color:#4f535a;">Sept</div><div class="t" style="left:851.3px;width:600px;text-align:center;top:585.7px;font-size:10.5px;font-weight:400;color:#4f535a;">Oct</div><div class="t" style="left:978.8px;width:600px;text-align:center;top:585.7px;font-size:10.5px;font-weight:400;color:#4f535a;">Nov</div><div class="t" style="left:1106.3px;width:600px;text-align:center;top:585.7px;font-size:10.5px;font-weight:400;color:#4f535a;">Dec</div><div class="t" style="left:1233.2px;width:600px;text-align:center;top:585.7px;font-size:10.5px;font-weight:400;color:#4f535a;">Jan</div><div class="t" style="left:1359.0px;width:600px;text-align:center;top:585.7px;font-size:10.5px;font-weight:400;color:#4f535a;">Feb</div><div class="t" style="left:1485.8px;width:600px;text-align:center;top:585.7px;font-size:10.5px;font-weight:400;color:#4f535a;">Mar</div><div class="a" style="left:82.4px;top:626.2px;width:860.3px;height:473.8px;background:#fff;border-radius:12px"></div><div class="t" style="left:102.6px;top:656.9px;font-size:15px;font-weight:700;color:#15181e;letter-spacing:-0.103px;">MTTA and MTTR</div><div class="a" style="left:538.3px;top:645.1px;width:205.2px;height:35.2px;background:#fff;border:1.2px solid #e3e4e7;border-radius:9px"></div><div class="t" style="left:574.5px;top:654.9px;font-size:15px;font-weight:400;color:#7b8089;letter-spacing:0.086px;">Search for teams</div><div class="a" style="left:753.8px;top:645.1px;width:121.6px;height:35.2px;background:#fff;border:1.2px solid #e3e4e7;border-radius:9px"></div><div class="t" style="left:789.7px;top:654.9px;font-size:15px;font-weight:400;color:#2f3237;letter-spacing:0.247px;">Sort by</div><svg style="left:0;top:0" width="1920" height="904"><circle cx="554.6" cy="661.4" r="6.6" fill="none" stroke="#6b7079" stroke-width="1.7"/><line x1="559.4" y1="666.1999999999999" x2="562.8000000000001" y2="669.6" stroke="#6b7079" stroke-width="1.7" stroke-linecap="round"/><g fill="none" stroke="#2b2f36" stroke-width="1.7" stroke-linecap="round" stroke-linejoin="round"><path d="M767.0,669.8 V657.0 M763.7,660.3 L767.0,657.0 L770.3,660.3"/><path d="M777.0,657.0 V669.8 M773.7,666.5 L777.0,669.8 L780.3,666.5"/><polyline points="854.0,661.0 859.1,666.0 864.2,661.0" stroke-width="1.5"/><path d="M905.0,657.3 V669.7 M898.9,663.5 H911.1"/></g></svg><div class="a" style="left:101.5px;top:710.3px;width:12.2px;height:12.2px;background:#f2a9ad;border-radius:50%"></div><div class="t" style="left:118.6px;top:710.0px;font-size:13px;font-weight:400;color:#23262c;-webkit-text-stroke:0.2px #23262c;">Billing team</div><div class="a" style="left:101.5px;top:746.4px;width:12.2px;height:12.2px;background:#fbb185;border-radius:50%"></div><div class="t" style="left:118.6px;top:746.1px;font-size:13px;font-weight:400;color:#23262c;-webkit-text-stroke:0.2px #23262c;">Operations</div><div class="a" style="left:101.5px;top:782.5px;width:12.2px;height:12.2px;background:#f3b561;border-radius:50%"></div><div class="t" style="left:118.6px;top:782.2px;font-size:13px;font-weight:400;color:#23262c;-webkit-text-stroke:0.2px #23262c;">Sales team</div><div class="a" style="left:101.5px;top:818.6px;width:12.2px;height:12.2px;background:#eed36d;border-radius:50%"></div><div class="t" style="left:118.6px;top:818.3px;font-size:13px;font-weight:400;color:#23262c;-webkit-text-stroke:0.2px #23262c;">Mobile app team</div><div class="a" style="left:101.5px;top:854.7px;width:12.2px;height:12.2px;background:#a7cf68;border-radius:50%"></div><div class="t" style="left:118.6px;top:854.4px;font-size:13px;font-weight:400;color:#23262c;-webkit-text-stroke:0.2px #23262c;">Marketing team</div><div class="a" style="left:101.5px;top:890.8px;width:12.2px;height:12.2px;background:#91d09f;border-radius:50%"></div><div class="t" style="left:118.6px;top:890.5px;font-size:13px;font-weight:400;color:#23262c;-webkit-text-stroke:0.2px #23262c;">HR team</div><svg style="left:0;top:0" width="1920" height="904"><line x1="237.5" y1="702" x2="237.5" y2="904" stroke="#e3e5e8" stroke-width="1" stroke-dasharray="2.5 3.5"/><line x1="294.7" y1="702" x2="294.7" y2="904" stroke="#e3e5e8" stroke-width="1" stroke-dasharray="2.5 3.5"/><line x1="351.9" y1="702" x2="351.9" y2="904" stroke="#e3e5e8" stroke-width="1" stroke-dasharray="2.5 3.5"/><line x1="409.1" y1="702" x2="409.1" y2="904" stroke="#e3e5e8" stroke-width="1" stroke-dasharray="2.5 3.5"/><line x1="466.3" y1="702" x2="466.3" y2="904" stroke="#e3e5e8" stroke-width="1" stroke-dasharray="2.5 3.5"/><line x1="523.5" y1="702" x2="523.5" y2="904" stroke="#e3e5e8" stroke-width="1" stroke-dasharray="2.5 3.5"/><line x1="580.7" y1="702" x2="580.7" y2="904" stroke="#e3e5e8" stroke-width="1" stroke-dasharray="2.5 3.5"/><line x1="637.9" y1="702" x2="637.9" y2="904" stroke="#e3e5e8" stroke-width="1" stroke-dasharray="2.5 3.5"/><line x1="695.1" y1="702" x2="695.1" y2="904" stroke="#e3e5e8" stroke-width="1" stroke-dasharray="2.5 3.5"/><line x1="752.3" y1="702" x2="752.3" y2="904" stroke="#e3e5e8" stroke-width="1" stroke-dasharray="2.5 3.5"/><line x1="809.5" y1="702" x2="809.5" y2="904" stroke="#e3e5e8" stroke-width="1" stroke-dasharray="2.5 3.5"/><line x1="866.7" y1="702" x2="866.7" y2="904" stroke="#e3e5e8" stroke-width="1" stroke-dasharray="2.5 3.5"/><line x1="923.9" y1="702" x2="923.9" y2="904" stroke="#e3e5e8" stroke-width="1" stroke-dasharray="2.5 3.5"/><line x1="246.2" y1="711.0" x2="341.4" y2="711.0" stroke="#f0a02d" stroke-width="4.5" stroke-linecap="round"/><line x1="246.2" y1="720.5" x2="549.8" y2="720.5" stroke="#8fbd2c" stroke-width="4.5" stroke-linecap="round"/><line x1="246.2" y1="747.1" x2="471.6" y2="747.1" stroke="#f0a02d" stroke-width="4.5" stroke-linecap="round"/><line x1="246.2" y1="756.6" x2="791.7" y2="756.6" stroke="#8fbd2c" stroke-width="4.5" stroke-linecap="round"/><line x1="246.2" y1="783.2" x2="317.5" y2="783.2" stroke="#f0a02d" stroke-width="4.5" stroke-linecap="round"/><line x1="246.2" y1="792.7" x2="501.4" y2="792.7" stroke="#8fbd2c" stroke-width="4.5" stroke-linecap="round"/><line x1="246.2" y1="819.3" x2="495.8" y2="819.3" stroke="#f0a02d" stroke-width="4.5" stroke-linecap="round"/><line x1="246.2" y1="828.8" x2="644.7" y2="828.8" stroke="#8fbd2c" stroke-width="4.5" stroke-linecap="round"/><line x1="246.2" y1="855.4" x2="371.7" y2="855.4" stroke="#f0a02d" stroke-width="4.5" stroke-linecap="round"/><line x1="246.2" y1="864.9" x2="691.8" y2="864.9" stroke="#8fbd2c" stroke-width="4.5" stroke-linecap="round"/><line x1="246.2" y1="891.5" x2="603.9" y2="891.5" stroke="#f0a02d" stroke-width="4.5" stroke-linecap="round"/><line x1="246.2" y1="901.0" x2="372.7" y2="901.0" stroke="#8fbd2c" stroke-width="4.5" stroke-linecap="round"/></svg><svg style="left:0;top:0" width="1920" height="904"><defs><filter id="dn" x="1820" y="570" width="90" height="340" filterUnits="userSpaceOnUse" color-interpolation-filters="sRGB"><feTurbulence type="fractalNoise" baseFrequency="0.8" numOctaves="2" seed="7" result="t"/><feColorMatrix in="t" type="matrix" values="8 0 0 0 -3.3  8 0 0 0 -3.3  8 0 0 0 -3.3  0 0 0 0 1" result="c"/><feComponentTransfer in="c" result="b"><feFuncR type="discrete" tableValues="0.32 1"/><feFuncG type="discrete" tableValues="0.32 1"/><feFuncB type="discrete" tableValues="0.32 1"/></feComponentTransfer><feComposite in="b" in2="SourceGraphic" operator="in"/></filter></defs><path d="M1825.6,578.5 C1845,582 1875,596 1888,615 C1896,628 1899,640 1899,660 L1899,904 L1825.6,904 Z" fill="#fff" filter="url(#dn)"/><path d="M1825.6,598 C1845,601 1866,618 1876,644.5 L1825.6,644.5 Z" fill="#525252"/><path d="M1825.6,609 C1842,616 1856,631 1864,644.5 L1825.6,644.5 Z" fill="#3f3f3f"/><rect x="1881.4" y="655" width="1" height="249" fill="#6a6a6a"/></svg><div class="a" style="left:0;top:0;width:1825.6px;height:904px;overflow:hidden"><div class="a" style="left:969.8px;top:646.2px;width:912px;height:400px;border-radius:12px;box-shadow:0 10px 140px rgba(25,28,40,0.18), 0 2px 20px rgba(25,28,40,0.04)"></div></div><div class="a" style="left:969.8px;top:646.2px;width:912.0px;height:453.8px;background:#fff;border-radius:12px"></div><div class="t" style="left:989.3px;top:678.0px;font-size:16px;font-weight:700;color:#15181e;letter-spacing:-0.241px;">Incidents by team</div><div class="a" style="left:1452.5px;top:665.7px;width:216.9px;height:39.0px;background:#fff;border:1.2px solid #e3e4e7;border-radius:9px"></div><div class="t" style="left:1490.0px;top:677.2px;font-size:16px;font-weight:400;color:#7b8089;letter-spacing:0.078px;">Search for teams</div><div class="a" style="left:1681.0px;top:665.7px;width:128.0px;height:39.0px;background:#fff;border:1.2px solid #e3e4e7;border-radius:9px"></div><div class="t" style="left:1718.6px;top:677.2px;font-size:16px;font-weight:400;color:#2f3237;letter-spacing:0.235px;">Sort by</div><svg style="left:0;top:0" width="1920" height="904"><circle cx="1469.2" cy="684" r="6.6" fill="none" stroke="#6b7079" stroke-width="1.7"/><line x1="1474.0" y1="688.8" x2="1477.4" y2="692.2" stroke="#6b7079" stroke-width="1.7" stroke-linecap="round"/><g fill="none" stroke="#2b2f36" stroke-width="1.7" stroke-linecap="round" stroke-linejoin="round"><path d="M1694.2,692.0 V679.2 M1690.9,682.5 L1694.2,679.2 L1697.5,682.5"/><path d="M1704.2,679.2 V692.0 M1700.9,688.7 L1704.2,692.0 L1707.5,688.7"/><polyline points="1786.8,683.2 1791.9,688.2 1797.0,683.2" stroke-width="1.5"/><path d="M1840.2,679.5 V691.9 M1834.1,685.7 H1846.3"/></g></svg><div class="a" style="left:1201.4px;top:726.6px;width:1.2px;height:177.4px;background:#e6e7ea"></div><div class="a" style="left:1222.1px;top:727.3px;width:303.3px;height:51.0px;background:#f6f7f9;border:1.2px solid #e4e6e9;border-radius:9px"></div><div class="a" style="left:1231.6px;top:745.2px;width:15.2px;height:15.2px;background:#f2a9ad;border-radius:50%"></div><div class="t" style="left:1257.4px;top:737.3px;font-size:14px;font-weight:400;color:#1d2026;font-weight:500;-webkit-text-stroke:0.25px #1d2026">Billing team</div><div class="t" style="left:1257.4px;top:755.5px;font-size:14px;font-weight:400;color:#6f747c;">38 incidents</div><div class="t" style="left:1483.9px;top:744.8px;font-size:16.5px;font-weight:700;color:#1d2026;transform:scaleX(0.9300);transform-origin:0 0;">37%</div><div class="a" style="left:1566.3px;top:745.2px;width:15.2px;height:15.2px;background:#fbb185;border-radius:50%"></div><div class="t" style="left:1592.1px;top:737.3px;font-size:14px;font-weight:400;color:#1d2026;font-weight:500;-webkit-text-stroke:0.25px #1d2026">Operations</div><div class="t" style="left:1592.1px;top:755.5px;font-size:14px;font-weight:400;color:#6f747c;">33 incidents</div><div class="t" style="left:1818.5px;top:744.8px;font-size:16.5px;font-weight:700;color:#1d2026;transform:scaleX(0.9300);transform-origin:0 0;">25%</div><div class="a" style="left:1231.6px;top:807.4px;width:15.2px;height:15.2px;background:#f2b55e;border-radius:50%"></div><div class="t" style="left:1257.4px;top:799.5px;font-size:14px;font-weight:400;color:#1d2026;font-weight:500;-webkit-text-stroke:0.25px #1d2026">Sales team</div><div class="t" style="left:1257.4px;top:817.7px;font-size:14px;font-weight:400;color:#6f747c;">26 incidents</div><div class="t" style="left:1483.9px;top:807.0px;font-size:16.5px;font-weight:700;color:#1d2026;transform:scaleX(0.9300);transform-origin:0 0;">22%</div><div class="a" style="left:1566.3px;top:807.4px;width:15.2px;height:15.2px;background:#eed36d;border-radius:50%"></div><div class="t" style="left:1592.1px;top:799.5px;font-size:14px;font-weight:400;color:#1d2026;font-weight:500;-webkit-text-stroke:0.25px #1d2026">Mobile app team</div><div class="t" style="left:1592.1px;top:817.7px;font-size:14px;font-weight:400;color:#6f747c;">24 incidents</div><div class="t" style="left:1818.5px;top:807.0px;font-size:16.5px;font-weight:700;color:#1d2026;transform:scaleX(0.9300);transform-origin:0 0;">17%</div><div class="a" style="left:1231.6px;top:869.6px;width:15.2px;height:15.2px;background:#a7cf68;border-radius:50%"></div><div class="t" style="left:1257.4px;top:861.7px;font-size:14px;font-weight:400;color:#1d2026;font-weight:500;-webkit-text-stroke:0.25px #1d2026">Marketing team</div><div class="t" style="left:1257.4px;top:879.9px;font-size:14px;font-weight:400;color:#6f747c;">20 incidents</div><div class="t" style="left:1483.9px;top:869.2px;font-size:16.5px;font-weight:700;color:#1d2026;transform:scaleX(0.9300);transform-origin:0 0;">16%</div><div class="a" style="left:1566.3px;top:869.6px;width:15.2px;height:15.2px;background:#91d09f;border-radius:50%"></div><div class="t" style="left:1592.1px;top:861.7px;font-size:14px;font-weight:400;color:#1d2026;font-weight:500;-webkit-text-stroke:0.25px #1d2026">HR team</div><div class="t" style="left:1592.1px;top:879.9px;font-size:14px;font-weight:400;color:#6f747c;">15 incidents</div><div class="t" style="left:1818.5px;top:869.2px;font-size:16.5px;font-weight:700;color:#1d2026;transform:scaleX(0.9300);transform-origin:0 0;">13%</div><svg style="left:0;top:0" width="1920" height="904"><path d="M1006.57,894.21 A105.7,105.7 0 0 1 1084.50,717.10 L1084.50,728.80 A94,94 0 0 0 1015.20,886.31 Z" fill="#fde3e4"/><path d="M1084.50,727.00 A95.8,95.8 0 0 1 1176.21,795.11 L1147.01,803.93 A65.3,65.3 0 0 0 1084.50,757.50 Z" fill="#fdb07c"/><path d="M1176.21,795.11 A95.8,95.8 0 0 1 1156.58,885.90 L1133.63,865.81 A65.3,65.3 0 0 0 1147.01,803.93 Z" fill="#eed16b"/><path d="M1156.58,885.90 A95.8,95.8 0 0 1 1014.44,888.14 L1036.74,867.33 A65.3,65.3 0 0 0 1133.63,865.81 Z" fill="#99c6f0"/><path d="M1014.44,888.14 A95.8,95.8 0 0 1 1084.50,727.00 L1084.50,757.50 A65.3,65.3 0 0 0 1036.74,867.33 Z" fill="#f2acad"/><line x1="1084.50" y1="759.80" x2="1084.50" y2="716.30" stroke="#fff" stroke-width="2.1"/><line x1="1144.81" y1="804.59" x2="1177.36" y2="794.76" stroke="#fff" stroke-width="2.1"/><line x1="1131.90" y1="864.30" x2="1157.48" y2="886.69" stroke="#fff" stroke-width="2.1"/><line x1="1038.42" y1="865.77" x2="1013.56" y2="888.95" stroke="#fff" stroke-width="2.1"/></svg><div class="t" style="left:1058.7px;top:795.9px;font-size:28.5px;font-weight:700;color:#121419;transform:scaleX(1.0536);transform-origin:0 0;">150</div><div class="t" style="left:1055.8px;top:831.9px;font-size:14.2px;font-weight:400;color:#4a4e55;letter-spacing:0.008px;">Incidents</div>
</body></html>
